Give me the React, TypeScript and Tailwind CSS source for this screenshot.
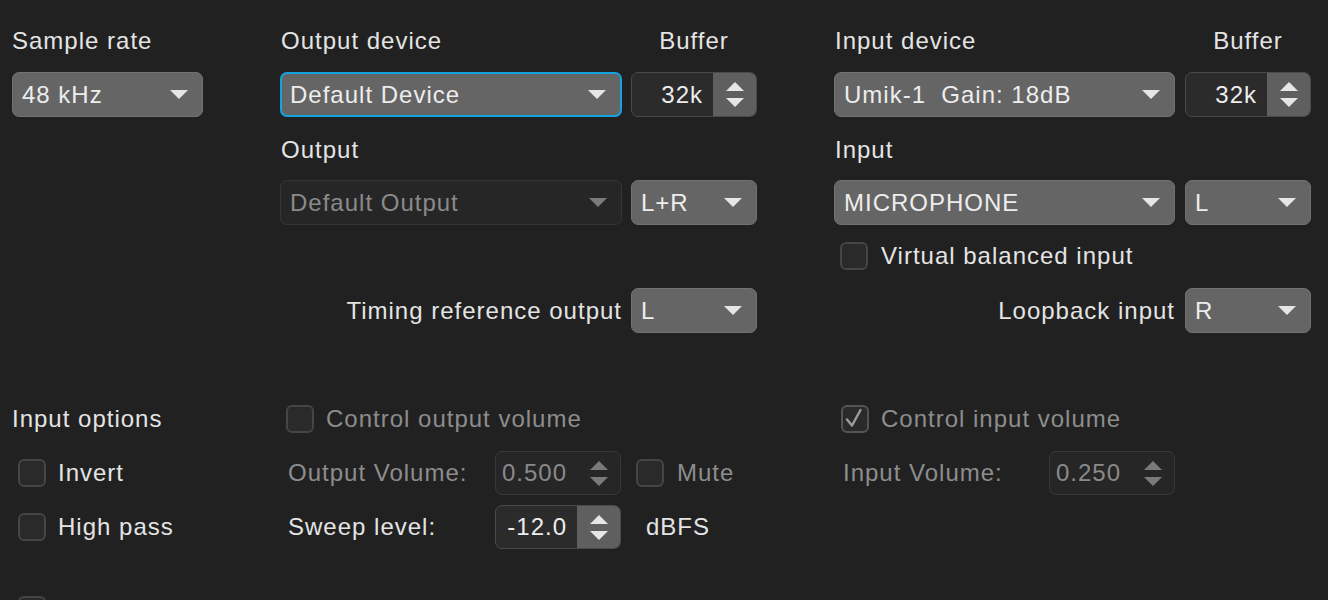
import React from "react";

const ARROW_ON = "#e6e6e6";
const ARROW_OFF = "#7a7a7a";

function Tri({ up, color }: { up?: boolean; color: string }) {
  return (
    <svg width="18" height="9" viewBox="0 0 18 9">
      <polygon points={up ? "9,0 18,9 0,9" : "0,0 18,0 9,9"} fill={color} />
    </svg>
  );
}

function Combo({
  value,
  width,
  focused,
  disabled,
}: {
  value: string;
  width: string;
  focused?: boolean;
  disabled?: boolean;
}) {
  let cls = "border bg-[#656565] border-[#727272] pl-[9px] text-[#ededed]";
  if (focused) cls = "border-2 bg-[#656565] border-[#15a2e0] pl-[8px] text-[#ededed]";
  if (disabled) cls = "border bg-[#262626] border-[#363636] pl-[9px] text-[#8a8a8a]";
  return (
    <div
      className={`${width} ${cls} h-[45px] rounded-[7px] pr-[14px] flex items-center justify-between shrink-0`}
    >
      <span className="whitespace-pre">{value}</span>
      <Tri color={disabled ? ARROW_OFF : ARROW_ON} />
    </div>
  );
}

function Spin({
  value,
  height,
  disabled,
}: {
  value: string;
  height: string;
  disabled?: boolean;
}) {
  return (
    <div
      className={`w-[126px] ${height} shrink-0 rounded-[7px] border overflow-hidden flex ${
        disabled ? "bg-[#262626] border-[#383838] text-[#8a8a8a]" : "bg-[#2b2b2b] border-[#4a4a4a] text-[#ededed]"
      }`}
    >
      <div className="flex-1 flex items-center justify-end pr-[10px]">{value}</div>
      <div
        className={`w-[43px] flex flex-col items-center justify-center gap-[7px] ${
          disabled ? "" : "bg-[#5f5f5f]"
        }`}
      >
        <Tri up color={disabled ? ARROW_OFF : ARROW_ON} />
        <Tri color={disabled ? ARROW_OFF : ARROW_ON} />
      </div>
    </div>
  );
}

function Check({ checked }: { checked?: boolean }) {
  return (
    <div
      className={`w-[28px] h-[28px] shrink-0 rounded-[6px] border-2 bg-[#2a2a2a] flex items-center justify-center ${
        checked ? "border-[#545454]" : "border-[#454545]"
      }`}
    >
      {checked && (
        <svg width="24" height="24" viewBox="0 0 24 24">
          <path
            d="M4 12.5 L9 18.5 L17.5 3"
            fill="none"
            stroke="#9c9c9c"
            strokeWidth="2.4"
            strokeLinecap="round"
            strokeLinejoin="round"
          />
        </svg>
      )}
    </div>
  );
}

export default function App() {
  return (
    <div className="min-h-screen w-full bg-[#212121] text-[#e4e4e4] font-['Liberation_Sans',Arial,sans-serif] text-[24px] leading-none tracking-[1px] pl-[12px] pt-[23px] overflow-hidden">
      {/* devices */}
      <div className="flex">
        <div className="w-[268px] flex flex-col">
          <div className="h-[36px] flex items-center">Sample rate</div>
          <div className="mt-[13px]">
            <Combo value="48 kHz" width="w-[191px]" />
          </div>
        </div>

        <div className="w-[477px] flex flex-col">
          <div className="h-[36px] flex items-center">
            <span className="flex-1 pl-[1px]">Output device</span>
            <span className="w-[126px] text-center">Buffer</span>
          </div>
          <div className="mt-[13px] flex gap-[9px]">
            <Combo value="Default Device" width="w-[342px]" focused />
            <Spin value="32k" height="h-[45px]" />
          </div>
          <div className="mt-[15px] h-[36px] flex items-center pl-[1px]">Output</div>
          <div className="mt-[12px] flex gap-[9px]">
            <Combo value="Default Output" width="w-[342px]" disabled />
            <Combo value="L+R" width="w-[126px]" />
          </div>
          <div className="mt-[63px] flex items-center justify-end gap-[9px]">
            <span>Timing reference output</span>
            <Combo value="L" width="w-[126px]" />
          </div>
        </div>

        <div className="ml-[77px] w-[477px] flex flex-col">
          <div className="h-[36px] flex items-center">
            <span className="flex-1 pl-[1px]">Input device</span>
            <span className="w-[126px] text-center">Buffer</span>
          </div>
          <div className="mt-[13px] flex gap-[10px]">
            <Combo value="Umik-1  Gain: 18dB" width="w-[341px]" />
            <Spin value="32k" height="h-[45px]" />
          </div>
          <div className="mt-[15px] h-[36px] flex items-center pl-[1px]">Input</div>
          <div className="mt-[12px] flex gap-[10px]">
            <Combo value="MICROPHONE" width="w-[341px]" />
            <Combo value="L" width="w-[126px]" />
          </div>
          <div className="mt-[17px] h-[27px] flex items-center gap-[13px] pl-[6px]">
            <Check />
            <span>Virtual balanced input</span>
          </div>
          <div className="mt-[19px] flex items-center justify-end gap-[10px]">
            <span>Loopback input</span>
            <Combo value="R" width="w-[126px]" />
          </div>
        </div>
      </div>

      {/* options */}
      <div className="mt-[58px] flex">
        <div className="w-[268px] flex flex-col">
          <div className="h-[55px] flex items-center">Input options</div>
          <div className="h-[54px] flex items-center gap-[12px] pl-[6px]">
            <Check />
            <span>Invert</span>
          </div>
          <div className="h-[54px] flex items-center gap-[12px] pl-[6px]">
            <Check />
            <span>High pass</span>
          </div>
          <div className="mt-[42px] pl-[6px]">
            <Check />
          </div>
        </div>

        <div className="w-[477px] flex flex-col">
          <div className="h-[55px] flex items-center gap-[12px] pl-[6px] text-[#8d8d8d]">
            <Check />
            <span>Control output volume</span>
          </div>
          <div className="h-[54px] flex items-center pl-[8px]">
            <span className="w-[207px] text-[#8d8d8d]">Output Volume:</span>
            <Spin value="0.500" height="h-[44px]" disabled />
            <div className="ml-[15px] flex items-center gap-[13px] text-[#8d8d8d]">
              <Check />
              <span>Mute</span>
            </div>
          </div>
          <div className="h-[54px] flex items-center pl-[8px]">
            <span className="w-[207px]">Sweep level:</span>
            <Spin value="-12.0" height="h-[44px]" />
            <span className="ml-[25px]">dBFS</span>
          </div>
        </div>

        <div className="ml-[77px] w-[477px] flex flex-col">
          <div className="h-[55px] flex items-center gap-[12px] pl-[7px] text-[#8d8d8d]">
            <Check checked />
            <span>Control input volume</span>
          </div>
          <div className="h-[54px] flex items-center pl-[9px]">
            <span className="w-[206px] text-[#8d8d8d]">Input Volume:</span>
            <Spin value="0.250" height="h-[44px]" disabled />
          </div>
        </div>
      </div>
    </div>
  );
}
